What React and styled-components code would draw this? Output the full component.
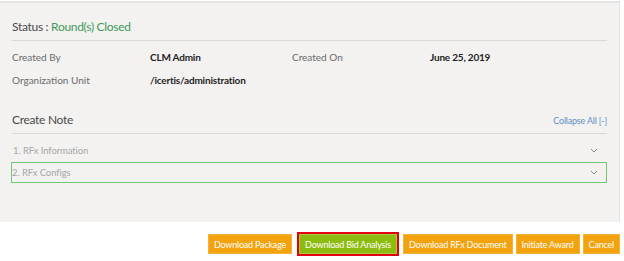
import React from "react";
import styled, { createGlobalStyle } from "styled-components";

const GlobalStyle = createGlobalStyle`
  html, body {
    margin: 0;
    padding: 0;
    background: #ffffff;
    font-family: Lato, "Open Sans", Arial, sans-serif;
  }
`;

const details = [
  [
    { label: "Created By", value: "CLM Admin" },
    { label: "Created On", value: "June 25, 2019" },
  ],
  [{ label: "Organization Unit", value: "/icertis/administration" }],
];

const sections = [
  { id: 1, title: "1. RFx Information", active: false },
  { id: 2, title: "2. RFx Configs", active: true },
];

const buttons = [
  { text: "Download Package" },
  { text: "Download Bid Analysis", primary: true },
  { text: "Download RFx Document" },
  { text: "Initiate Award" },
  { text: "Cancel" },
];

const Chevron = () => (
  <svg width="8" height="5" viewBox="0 0 8 5">
    <path d="M1 1 L4 4 L7 1" fill="none" stroke="#8a8a8a" strokeWidth="1" />
  </svg>
);

const App = () => {
  return (
    <Page>
      <GlobalStyle />
      <Panel>
        <Status>
          Status : <StatusValue>Round(s) Closed</StatusValue>
        </Status>
        <Details>
          {details.map((row, i) => (
            <DetailRow key={i}>
              {row.map((item) => (
                <React.Fragment key={item.label}>
                  <Label>{item.label}</Label>
                  <Value>{item.value}</Value>
                </React.Fragment>
              ))}
            </DetailRow>
          ))}
        </Details>
        <NoteHeader>
          <NoteTitle>Create Note</NoteTitle>
          <CollapseLink>Collapse All [-]</CollapseLink>
        </NoteHeader>
        <Sections>
          {sections.map((s) => (
            <SectionRow key={s.id} $active={s.active}>
              <SectionTitle>{s.title}</SectionTitle>
              <Chevron />
            </SectionRow>
          ))}
        </Sections>
      </Panel>
      <Actions>
        {buttons.map((b) =>
          b.primary ? (
            <Focus key={b.text}>
              <Button $primary>{b.text}</Button>
            </Focus>
          ) : (
            <Button key={b.text}>{b.text}</Button>
          )
        )}
      </Actions>
    </Page>
  );
};

const Page = styled.div`
  width: 624px;
  height: 261px;
  padding-top: 1px;
  box-sizing: border-box;
`;

const Panel = styled.div`
  width: 620px;
  height: 221px;
  box-sizing: border-box;
  background: #f3f2f1;
  border-top: 2px solid #e4e3e2;
  border-right: 1px solid #e6e5e4;
  padding: 15px 12px 0 12px;
`;

const Status = styled.div`
  font-size: 12px;
  letter-spacing: -0.3px;
  color: #4a4a4a;
  line-height: 18px;
  padding-bottom: 4px;
  border-bottom: 1px solid #d9d8d7;
`;

const StatusValue = styled.span`
  color: #3f9a5a;
`;

const Details = styled.div`
  display: flex;
  flex-direction: column;
  gap: 9px;
  padding-top: 9px;
`;

const DetailRow = styled.div`
  display: grid;
  grid-template-columns: 138px 142px 138px auto;
  line-height: 14px;
`;

const Label = styled.span`
  font-size: 10px;
  color: #6a6a6a;
`;

const Value = styled.span`
  font-size: 10px;
  color: #1f1f1f;
  font-weight: 700;
  letter-spacing: -0.2px;
`;

const NoteHeader = styled.div`
  display: flex;
  justify-content: space-between;
  align-items: flex-end;
  margin-top: 24px;
  padding-bottom: 4px;
  border-bottom: 1px solid #d9d8d7;
`;

const NoteTitle = styled.span`
  font-size: 12px;
  letter-spacing: -0.3px;
  color: #4a4a4a;
  line-height: 18px;
`;

const CollapseLink = styled.span`
  font-size: 9px;
  letter-spacing: -0.2px;
  color: #5f8fc6;
  line-height: 14px;
  padding-bottom: 1px;
`;

const Sections = styled.div`
  display: flex;
  flex-direction: column;
  gap: 1px;
  padding-top: 6px;
`;

const SectionRow = styled.div`
  display: flex;
  justify-content: space-between;
  align-items: center;
  height: 21px;
  box-sizing: border-box;
  padding: 0 8px 0 0;
  border: 1px solid ${(p) => (p.$active ? "#72c872" : "transparent")};
  margin-left: ${(p) => (p.$active ? "-1px" : "0")};
`;

const SectionTitle = styled.span`
  font-size: 9.5px;
  letter-spacing: -0.1px;
  color: #a6a6a6;
`;

const Actions = styled.div`
  display: flex;
  justify-content: flex-end;
  align-items: center;
  gap: 3px;
  padding: 10px 4px 0 0;
`;

const Focus = styled.div`
  border: 2px solid #e3000f;
  padding: 0;
  margin: 0 1px 0 2px;
`;

const Button = styled.button`
  font-family: inherit;
  font-size: 9px;
  letter-spacing: -0.2px;
  height: 20px;
  padding: 0 5px;
  border: 1px solid ${(p) => (p.$primary ? "#a9c83a" : "#f7b23a")};
  background: ${(p) => (p.$primary ? "#8dbb10" : "#f2a20c")};
  color: #ffffff;
  cursor: pointer;
  display: block;
`;

export default App;
